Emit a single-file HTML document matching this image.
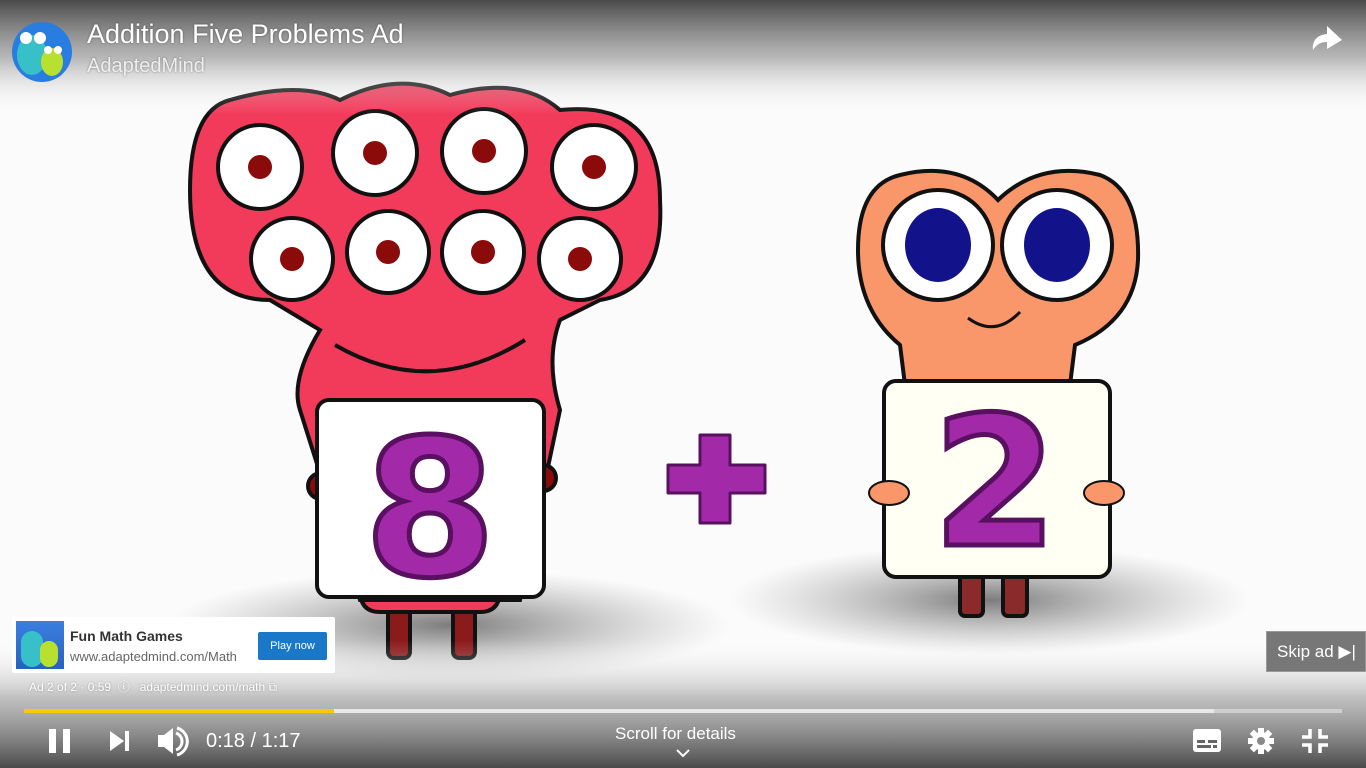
<!DOCTYPE html>
<html><head><meta charset="utf-8"><style>
html,body{margin:0;padding:0;width:1366px;height:768px;overflow:hidden;background:#fafafa;font-family:"Liberation Sans",Roboto,sans-serif}
.abs{position:absolute}
</style></head><body>
<svg class="abs" style="left:0;top:0" width="1366" height="768" viewBox="0 0 1366 768">
<defs>
<radialGradient id="sh" cx="50%" cy="50%" r="50%"><stop offset="0" stop-color="#666" stop-opacity=".85"/><stop offset="1" stop-color="#999" stop-opacity="0"/></radialGradient>
<linearGradient id="top" x1="0" y1="0" x2="0" y2="1"><stop offset="0" stop-color="#4a4a4a"/><stop offset="0.5" stop-color="#8a8a8a" stop-opacity=".6"/><stop offset="1" stop-color="#fff" stop-opacity="0"/></linearGradient>
<linearGradient id="bot" x1="0" y1="0" x2="0" y2="1"><stop offset="0" stop-color="#fff" stop-opacity="0"/><stop offset="0.45" stop-color="#999" stop-opacity=".6"/><stop offset="1" stop-color="#4a4a4a"/></linearGradient>
</defs>
<rect width="1366" height="768" fill="#fbfbfb"/>
<ellipse cx="450" cy="625" rx="280" ry="55" fill="url(#sh)"/>
<ellipse cx="990" cy="600" rx="260" ry="55" fill="url(#sh)"/>
<g stroke="#111" stroke-width="4">
<rect x="388" y="580" width="22" height="78" rx="6" fill="#8b1a1a"/>
<rect x="453" y="580" width="22" height="78" rx="6" fill="#8b1a1a"/>
<path d="M360 590 Q360 612 380 612 L480 612 Q500 612 500 590Z" fill="#f23a5a"/>
<path d="M230 100 Q300 80 340 100 Q400 70 450 95 Q520 75 560 110 Q660 100 660 200 Q665 290 600 300 L560 320 Q545 360 560 410 L520 600 L360 600 L300 410 Q290 380 320 330 L270 300 Q190 300 190 190 Q190 110 230 100Z" fill="#f23a5a"/>
<g fill="#fff">
<circle cx="260" cy="167" r="42"/><circle cx="375" cy="153" r="42"/><circle cx="484" cy="151" r="42"/><circle cx="594" cy="167" r="42"/>
<circle cx="292" cy="259" r="41"/><circle cx="388" cy="252" r="41"/><circle cx="483" cy="252" r="41"/><circle cx="580" cy="259" r="41"/>
</g>
<g fill="#8b0a0a" stroke="none">
<circle cx="260" cy="167" r="12"/><circle cx="375" cy="153" r="12"/><circle cx="484" cy="151" r="12"/><circle cx="594" cy="167" r="12"/>
<circle cx="292" cy="259" r="12"/><circle cx="388" cy="252" r="12"/><circle cx="483" cy="252" r="12"/><circle cx="580" cy="259" r="12"/>
</g>
<path d="M335 345 Q430 400 525 340" fill="none"/>
<circle cx="321" cy="486" r="13" fill="#8b0a0a"/><circle cx="543" cy="478" r="13" fill="#8b0a0a"/>
<rect x="317" y="400" width="227" height="197" rx="12" fill="#fff"/>
</g>
<text x="430" y="575" text-anchor="middle" font-family="DejaVu Sans" font-weight="bold" font-size="190" fill="#a22aa8" stroke="#5a1060" stroke-width="5">8</text>
<path d="M700 435 h30 v30 h35 v28 h-35 v30 h-30 v-30 h-32 v-28 h32z" fill="#a22aa8" stroke="#5a1060" stroke-width="3" stroke-linejoin="round"/>
<g stroke="#111" stroke-width="4">
<rect x="960" y="560" width="23" height="56" rx="5" fill="#8b2a2a"/>
<rect x="1003" y="560" width="24" height="56" rx="5" fill="#8b2a2a"/>
<path d="M900 175 Q960 160 998 200 Q1040 160 1100 175 Q1140 190 1138 260 Q1135 320 1075 345 L1070 385 L905 385 L900 345 Q858 310 858 250 Q858 185 900 175Z" fill="#f9966a"/>
<circle cx="938" cy="245" r="55" fill="#fff"/><circle cx="1057" cy="245" r="55" fill="#fff"/>
<ellipse cx="938" cy="245" rx="33" ry="37" fill="#12128a" stroke="none"/><ellipse cx="1057" cy="245" rx="33" ry="37" fill="#12128a" stroke="none"/>
<path d="M968 318 Q995 338 1020 312" fill="none" stroke-width="3"/>
<rect x="884" y="381" width="226" height="196" rx="12" fill="#fffff4"/>
<ellipse cx="889" cy="493" rx="20" ry="12" fill="#f9966a" stroke-width="2"/><ellipse cx="1104" cy="493" rx="20" ry="12" fill="#f9966a" stroke-width="2"/>
</g>
<text x="995" y="545" text-anchor="middle" font-family="DejaVu Sans" font-weight="bold" font-size="180" fill="#a22aa8" stroke="#5a1060" stroke-width="5">2</text>
<rect width="1366" height="115" fill="url(#top)"/>
<rect y="640" width="1366" height="128" fill="url(#bot)"/>
<circle cx="42" cy="52" r="30" fill="#2a7de0"/>
<ellipse cx="32" cy="55" rx="15" ry="20" fill="#38c0c8"/>
<ellipse cx="52" cy="62" rx="11" ry="14" fill="#b8e030"/>
<circle cx="26" cy="38" r="6" fill="#fff"/><circle cx="40" cy="38" r="6" fill="#fff"/>
<circle cx="48" cy="50" r="4" fill="#fff"/><circle cx="58" cy="50" r="4" fill="#fff"/>
<path d="M1342 40 L1327 26 V34 C1316 35 1312 42 1313 50 C1317 44 1321 42 1327 42 V49Z" fill="#fff"/>
<rect x="24" y="709" width="1318" height="4" fill="#ddd" opacity=".7"/>
<rect x="24" y="709" width="1190" height="4" fill="#e8e8e8"/>
<rect x="24" y="709" width="310" height="4" fill="#f9c800"/>
<rect x="49" y="729" width="7" height="24" fill="#fff"/><rect x="63" y="729" width="7" height="24" fill="#fff"/>
<path d="M110 731 L124 741 L110 751Z M125 731 h4 v20 h-4z" fill="#fff"/>
<path d="M158 735 h6 l9 -7 v26 l-9 -7 h-6z" fill="#fff"/>
<path d="M176 733 a9 9 0 0 1 0 17" stroke="#fff" stroke-width="3" fill="none"/>
<path d="M177 728 a14 14 0 0 1 0 27" stroke="#fff" stroke-width="3" fill="none"/>
<path d="M677 750 l6 6 l6 -6" stroke="#fff" stroke-width="2" fill="none"/>
<rect x="1193" y="729" width="28" height="23" rx="3" fill="#fff"/>
<rect x="1197" y="740" width="8" height="3" fill="#666"/><rect x="1208" y="740" width="9" height="3" fill="#666"/>
<rect x="1197" y="745" width="14" height="3" fill="#666"/><rect x="1213" y="745" width="4" height="3" fill="#666"/>
<circle cx="1261" cy="741" r="9" fill="#fff"/>
<g fill="#fff"><rect x="1258" y="728" width="6" height="26"/><rect x="1248" y="738" width="26" height="6"/>
<rect x="1258" y="728" width="6" height="26" transform="rotate(45 1261 741)"/><rect x="1258" y="728" width="6" height="26" transform="rotate(-45 1261 741)"/></g>
<circle cx="1261" cy="741" r="4" fill="#888"/>
<path d="M1310 729 v8 h-8 M1320 729 v8 h8 M1310 753 v-8 h-8 M1320 753 v-8 h8" stroke="#fff" stroke-width="3.5" fill="none"/>
</svg>
<div class="abs" style="left:87px;top:19px;font-size:27px;color:#fff;text-shadow:0 0 2px rgba(0,0,0,.4)">Addition Five Problems Ad</div>
<div class="abs" style="left:87px;top:55px;font-size:20px;color:#eee;text-shadow:0 0 2px rgba(0,0,0,.4)">AdaptedMind</div>
<div class="abs" style="left:12px;top:617px;width:323px;height:56px;background:#fff;border-radius:2px">
 <div class="abs" style="left:4px;top:4px;width:48px;height:48px;background:linear-gradient(#3a7fe0,#2a60c0)">
  <div class="abs" style="left:5px;top:10px;width:22px;height:36px;border-radius:11px;background:#38c0c8"></div>
  <div class="abs" style="left:24px;top:20px;width:18px;height:26px;border-radius:9px;background:#b8e030"></div>
 </div>
 <div class="abs" style="left:58px;top:11px;font-size:14px;font-weight:bold;color:#333">Fun Math Games</div>
 <div class="abs" style="left:58px;top:32px;font-size:13px;color:#666">www.adaptedmind.com/Math</div>
 <div class="abs" style="left:246px;top:15px;width:69px;height:28px;background:#1a78c8;color:#fff;font-size:11px;line-height:28px;text-align:center;border-radius:2px">Play now</div>
</div>
<div class="abs" style="left:29px;top:678px;font-size:12px;color:#fff;text-shadow:0 0 2px rgba(0,0,0,.3)">Ad 2 of 2 · 0:59 &nbsp;ⓘ&nbsp;&nbsp; adaptedmind.com/math ⧉</div>
<div class="abs" style="left:1266px;top:631px;width:100px;height:41px;background:#777;border:1px solid #999;box-sizing:border-box;color:#fff;font-size:17px;line-height:40px;padding-left:10px">Skip ad ▶|</div>
<div class="abs" style="left:206px;top:730px;font-size:20px;color:#fff">0:18 / 1:17</div>
<div class="abs" style="left:615px;top:724px;font-size:17px;color:#fff">Scroll for details</div>
</body></html>
